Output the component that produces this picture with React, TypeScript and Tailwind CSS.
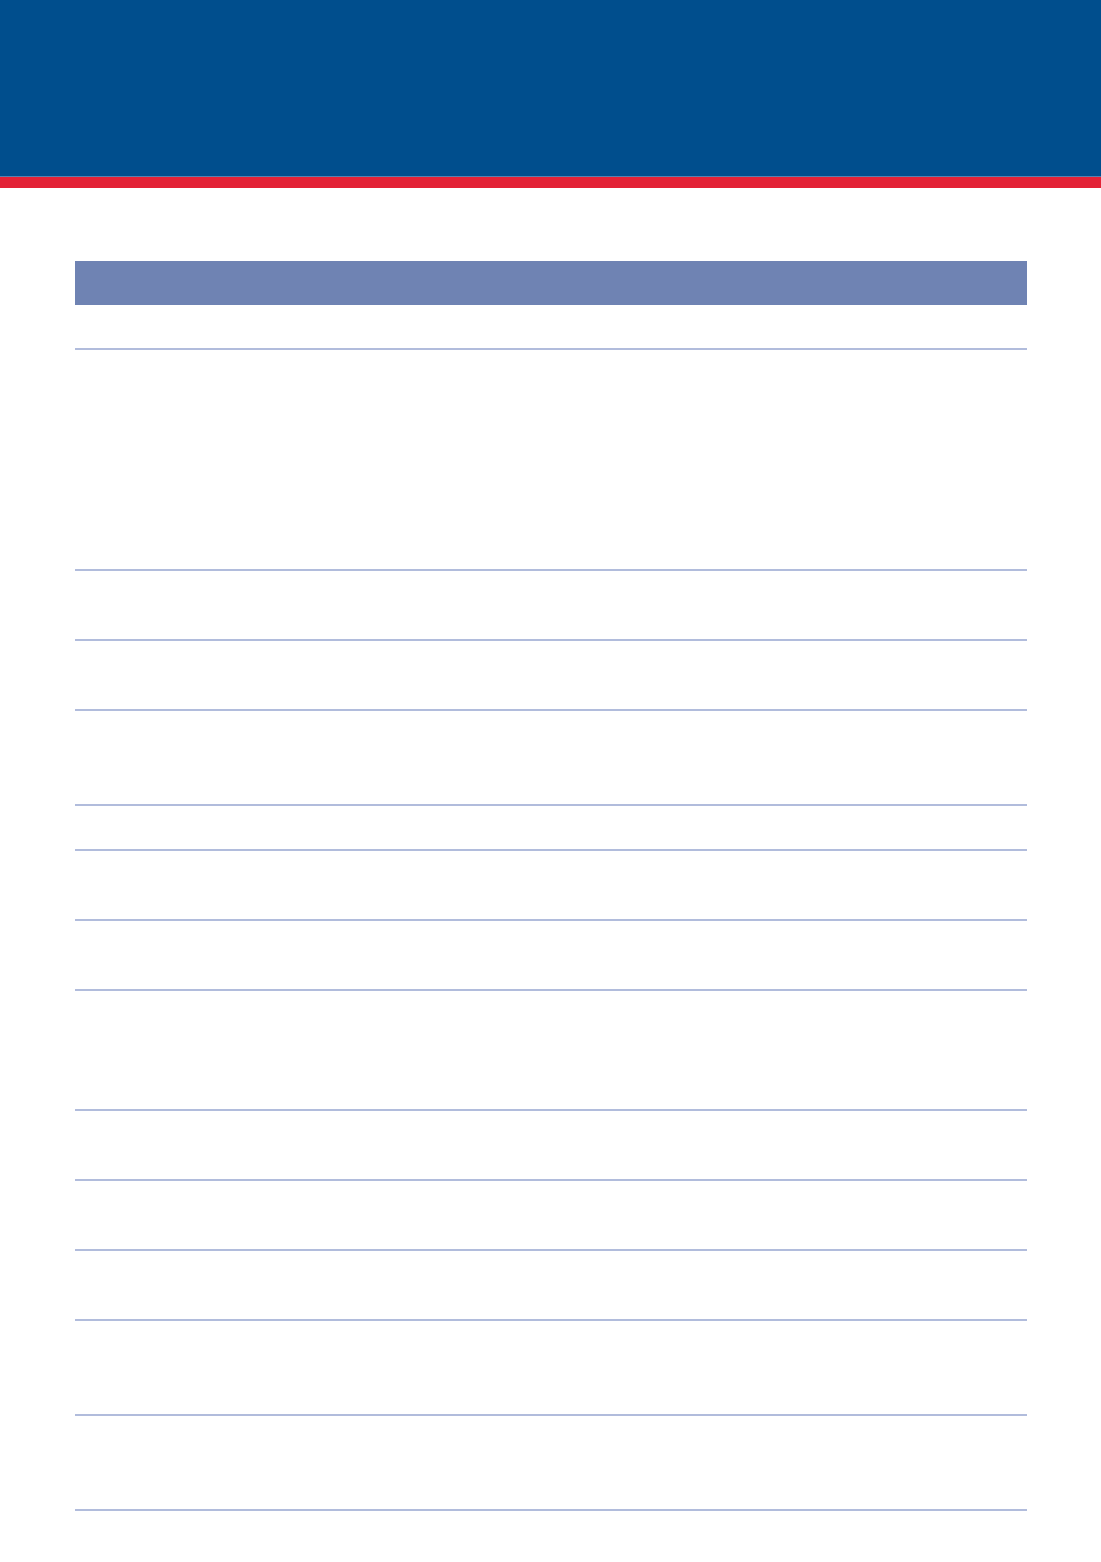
import React from 'react';

const rows = [45, 221, 70, 70, 95, 45, 70, 70, 120, 70, 70, 70, 95, 95];

export default function App() {
  return (
    <div className="w-[1101px] h-[1562px] bg-white flex flex-col" style={{ fontFamily: '"Liberation Sans", Arial, sans-serif' }}>
      {/* Top banner */}
      <div className="h-[177px] bg-[#004e8d] border-b border-[#5a7fae]" />
      <div className="h-[11px] bg-[#e32236]" />

      {/* Table */}
      <div className="mt-[73px] ml-[75px] w-[952px] flex flex-col">
        <div className="h-[44px] bg-[#6f83b3]" />
        {rows.map((h, i) => (
          <div key={i} className={`border-b-2 border-[#b1bcdc] ${heightClass(h)}`} />
        ))}
      </div>
    </div>
  );
}

function heightClass(h: number) {
  switch (h) {
    case 45:
      return 'h-[45px]';
    case 70:
      return 'h-[70px]';
    case 95:
      return 'h-[95px]';
    case 120:
      return 'h-[120px]';
    case 221:
      return 'h-[221px]';
    default:
      return 'h-[70px]';
  }
}
